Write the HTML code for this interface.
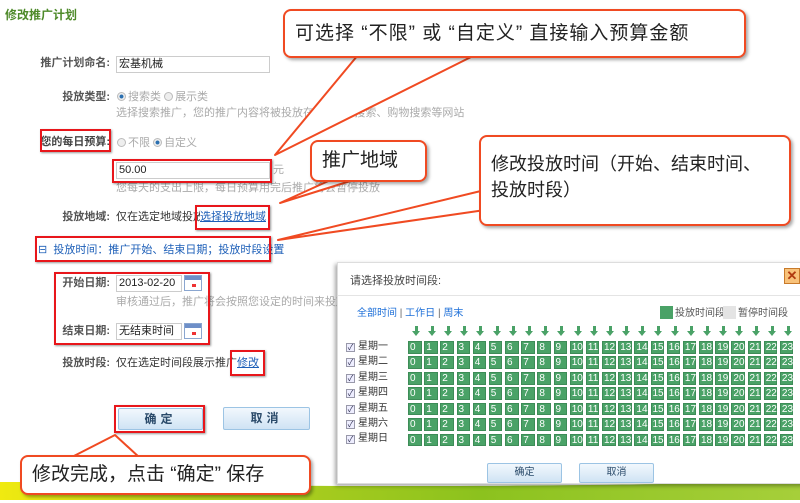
<!DOCTYPE html>
<html><head><meta charset="utf-8"><style>
*{margin:0;padding:0;box-sizing:border-box}
body{width:800px;height:503px;position:relative;overflow:hidden;background:#fff;font-family:"Liberation Sans","Noto Sans CJK SC",sans-serif;font-size:11px;line-height:13px;color:#333}
.a{position:absolute;white-space:nowrap}
.lbl{font-weight:bold;color:#555;text-align:right;width:110px;left:0}
.hint{color:#aaa}
.inp{border:1px solid #ccc;background:#fff;height:17px;padding-left:2px;line-height:15px;color:#222}
.rb{position:absolute;border:2px solid #e8161b;box-shadow:1px 1px 2px rgba(0,0,0,.4)}
.radio{display:inline-block;width:9px;height:9px;border-radius:50%;border:1px solid #bbb;background:#eee;vertical-align:-1px;margin-right:2px}
.radio.on{background:radial-gradient(circle,#2a6fb0 35%,#eee 45%)}
.cal{position:absolute;width:18px;height:16px;border:1px solid #8aa6d0;background:linear-gradient(#6e8fc8 0 4px,#fff 4px);}
.cal:after{content:"";position:absolute;left:7px;top:8px;width:4px;height:3px;background:#e33}
.btn{position:absolute;border:1px solid #9cc4e4;border-radius:2px;background:linear-gradient(#f2f8fd,#cfe3f4);font-weight:bold;color:#2a4a6a;text-align:center;font-size:12px;letter-spacing:4px}
.co{position:absolute;background:#fff;border:2px solid #f04a22;border-radius:8px;box-shadow:2px 2px 3px rgba(0,0,0,.35);font-size:19px;color:#222;padding-left:10px}
.dlg{position:absolute;left:337px;top:262px;width:470px;height:222px;background:#fff;box-shadow:-2px 2px 4px rgba(0,0,0,.35);border:1px solid #ddd}
.row{position:absolute;left:70px;height:13px}
.row span{position:absolute;width:13.5px;height:12.7px;background:#4aa267;color:#fff;font-size:10px;line-height:11px;text-indent:1px;border:1px solid #3d8c57}
.day{position:absolute;left:8px;font-size:10px;line-height:12px;color:#333}
.ck{display:inline-block;width:9px;height:9px;border:1px solid #99a;background:#eef;font-size:8px;line-height:8px;color:#335;text-align:center;margin-right:3px;vertical-align:-1px;font-style:normal}
.ar{position:absolute;top:68px;width:0;height:0;border-left:4px solid transparent;border-right:4px solid transparent;border-top:5px solid #4aa267}
.ar:before{content:"";position:absolute;left:-1.5px;top:-10px;width:3px;height:5px;background:#4aa267}
</style></head><body>

<div class="a" style="left:0;top:482px;width:800px;height:18px;background:linear-gradient(90deg,#f0ea10,#b8d21e 25%,#8cc21e 60%,#a6cf3a)"></div>
<div class="a" style="left:0;top:478px;width:800px;height:8px;background:#fff;border-radius:0 0 50% 50%/0 0 100% 100%"></div>

<div class="a" style="left:5px;top:9px;font-size:12px;font-weight:bold;color:#4e8a2a">修改推广计划</div>

<div class="a lbl" style="top:57px">推广计划命名:</div>
<div class="a inp" style="left:116px;top:56px;width:154px">宏基机械</div>

<div class="a lbl" style="top:91px">投放类型:</div>
<div class="a hint" style="left:117px;top:91px"><i class="radio on"></i>搜索类 <i class="radio"></i>展示类</div>
<div class="a hint" style="left:116px;top:107px">选择搜索推广，您的推广内容将被投放在360综合搜索、购物搜索等网站</div>

<div class="a lbl" style="top:136px;color:#444">您的每日预算:</div>
<div class="a hint" style="left:117px;top:137px"><i class="radio"></i>不限 <i class="radio on"></i>自定义</div>
<div class="a inp" style="left:116px;top:162px;width:154px">50.00</div>
<div class="a hint" style="left:273px;top:164px">元</div>
<div class="a hint" style="left:116px;top:182px">您每天的支出上限，每日预算用完后推广将会暂停投放</div>

<div class="a lbl" style="top:211px">投放地域:</div>
<div class="a" style="left:116px;top:211px">仅在选定地域投放</div>
<div class="a" style="left:200px;top:211px;color:#1d5fb8;text-decoration:underline;background:#fff">选择投放地域</div>

<div class="a" style="left:38px;top:244px;color:#1d5fb8">⊟ &nbsp;投放时间：推广开始、结束日期；投放时段设置</div>

<div class="a lbl" style="top:277px">开始日期:</div>
<div class="a inp" style="left:116px;top:275px;width:66px">2013-02-20</div>
<div class="cal" style="left:184px;top:275px"></div>
<div class="a hint" style="left:116px;top:296px">审核通过后，推广将会按照您设定的时间来投放</div>
<div class="a lbl" style="top:325px">结束日期:</div>
<div class="a inp" style="left:116px;top:323px;width:66px">无结束时间</div>
<div class="cal" style="left:184px;top:323px"></div>

<div class="a lbl" style="top:357px">投放时段:</div>
<div class="a" style="left:116px;top:357px">仅在选定时间段展示推广</div>
<div class="a" style="left:237px;top:357px;color:#1d5fb8;text-decoration:underline">修改</div>

<div class="btn" style="left:118px;top:408px;width:85px;height:22px;line-height:20px">确定</div>
<div class="btn" style="left:223px;top:407px;width:87px;height:23px;line-height:21px">取消</div>

<!-- dialog -->
<div class="dlg">
<div class="a" style="left:12px;top:12px;color:#444">请选择投放时间段:</div>
<div class="a" style="left:446px;top:5px;width:16px;height:16px;border:1px solid #c87a2a;background:#f8c27a;color:#b03a10;font-size:13px;line-height:14px;text-align:center;font-weight:bold">✕</div>
<div class="a" style="left:0;top:32px;width:470px;border-top:1px solid #e4e4e4"></div>
<div class="a" style="left:19px;top:44px;color:#1d6fd8;font-size:10px">全部时间 <span style="color:#666">|</span> 工作日 <span style="color:#666">|</span> 周末</div>
<div class="a" style="left:322px;top:43px;width:13px;height:13px;background:#4aa267"></div>
<div class="a" style="left:337px;top:44px;font-size:10px;color:#555">投放时间段</div>
<div class="a" style="left:385px;top:43px;width:13px;height:13px;background:#e4e4e4"></div>
<div class="a" style="left:400px;top:44px;font-size:10px;color:#555">暂停时间段</div>

<div class="ar" style="left:74px"></div><div class="ar" style="left:90px"></div><div class="ar" style="left:106px"></div><div class="ar" style="left:122px"></div><div class="ar" style="left:138px"></div><div class="ar" style="left:155px"></div><div class="ar" style="left:171px"></div><div class="ar" style="left:187px"></div><div class="ar" style="left:203px"></div><div class="ar" style="left:219px"></div><div class="ar" style="left:236px"></div><div class="ar" style="left:252px"></div><div class="ar" style="left:268px"></div><div class="ar" style="left:284px"></div><div class="ar" style="left:300px"></div><div class="ar" style="left:316px"></div><div class="ar" style="left:333px"></div><div class="ar" style="left:349px"></div><div class="ar" style="left:365px"></div><div class="ar" style="left:381px"></div><div class="ar" style="left:397px"></div><div class="ar" style="left:414px"></div><div class="ar" style="left:430px"></div><div class="ar" style="left:446px"></div>

<div class="day" style="top:78px"><i class="ck">✓</i>星期一</div>
<div class="day" style="top:93px"><i class="ck">✓</i>星期二</div>
<div class="day" style="top:109px"><i class="ck">✓</i>星期三</div>
<div class="day" style="top:124px"><i class="ck">✓</i>星期四</div>
<div class="day" style="top:140px"><i class="ck">✓</i>星期五</div>
<div class="day" style="top:155px"><i class="ck">✓</i>星期六</div>
<div class="day" style="top:170px"><i class="ck">✓</i>星期日</div>

<div class="row" style="top:78px"><span style="left:0">0</span><span style="left:16.2px">1</span><span style="left:32.3px">2</span><span style="left:48.5px">3</span><span style="left:64.7px">4</span><span style="left:80.8px">5</span><span style="left:97px">6</span><span style="left:113.2px">7</span><span style="left:129.4px">8</span><span style="left:145.5px">9</span><span style="left:161.7px">10</span><span style="left:177.9px">11</span><span style="left:194px">12</span><span style="left:210.2px">13</span><span style="left:226.4px">14</span><span style="left:242.5px">15</span><span style="left:258.7px">16</span><span style="left:274.9px">17</span><span style="left:291px">18</span><span style="left:307.2px">19</span><span style="left:323.4px">20</span><span style="left:339.5px">21</span><span style="left:355.7px">22</span><span style="left:371.9px">23</span></div>
<div class="row" style="top:93.4px"><span style="left:0">0</span><span style="left:16.2px">1</span><span style="left:32.3px">2</span><span style="left:48.5px">3</span><span style="left:64.7px">4</span><span style="left:80.8px">5</span><span style="left:97px">6</span><span style="left:113.2px">7</span><span style="left:129.4px">8</span><span style="left:145.5px">9</span><span style="left:161.7px">10</span><span style="left:177.9px">11</span><span style="left:194px">12</span><span style="left:210.2px">13</span><span style="left:226.4px">14</span><span style="left:242.5px">15</span><span style="left:258.7px">16</span><span style="left:274.9px">17</span><span style="left:291px">18</span><span style="left:307.2px">19</span><span style="left:323.4px">20</span><span style="left:339.5px">21</span><span style="left:355.7px">22</span><span style="left:371.9px">23</span></div>
<div class="row" style="top:108.9px"><span style="left:0">0</span><span style="left:16.2px">1</span><span style="left:32.3px">2</span><span style="left:48.5px">3</span><span style="left:64.7px">4</span><span style="left:80.8px">5</span><span style="left:97px">6</span><span style="left:113.2px">7</span><span style="left:129.4px">8</span><span style="left:145.5px">9</span><span style="left:161.7px">10</span><span style="left:177.9px">11</span><span style="left:194px">12</span><span style="left:210.2px">13</span><span style="left:226.4px">14</span><span style="left:242.5px">15</span><span style="left:258.7px">16</span><span style="left:274.9px">17</span><span style="left:291px">18</span><span style="left:307.2px">19</span><span style="left:323.4px">20</span><span style="left:339.5px">21</span><span style="left:355.7px">22</span><span style="left:371.9px">23</span></div>
<div class="row" style="top:124.3px"><span style="left:0">0</span><span style="left:16.2px">1</span><span style="left:32.3px">2</span><span style="left:48.5px">3</span><span style="left:64.7px">4</span><span style="left:80.8px">5</span><span style="left:97px">6</span><span style="left:113.2px">7</span><span style="left:129.4px">8</span><span style="left:145.5px">9</span><span style="left:161.7px">10</span><span style="left:177.9px">11</span><span style="left:194px">12</span><span style="left:210.2px">13</span><span style="left:226.4px">14</span><span style="left:242.5px">15</span><span style="left:258.7px">16</span><span style="left:274.9px">17</span><span style="left:291px">18</span><span style="left:307.2px">19</span><span style="left:323.4px">20</span><span style="left:339.5px">21</span><span style="left:355.7px">22</span><span style="left:371.9px">23</span></div>
<div class="row" style="top:139.8px"><span style="left:0">0</span><span style="left:16.2px">1</span><span style="left:32.3px">2</span><span style="left:48.5px">3</span><span style="left:64.7px">4</span><span style="left:80.8px">5</span><span style="left:97px">6</span><span style="left:113.2px">7</span><span style="left:129.4px">8</span><span style="left:145.5px">9</span><span style="left:161.7px">10</span><span style="left:177.9px">11</span><span style="left:194px">12</span><span style="left:210.2px">13</span><span style="left:226.4px">14</span><span style="left:242.5px">15</span><span style="left:258.7px">16</span><span style="left:274.9px">17</span><span style="left:291px">18</span><span style="left:307.2px">19</span><span style="left:323.4px">20</span><span style="left:339.5px">21</span><span style="left:355.7px">22</span><span style="left:371.9px">23</span></div>
<div class="row" style="top:155.2px"><span style="left:0">0</span><span style="left:16.2px">1</span><span style="left:32.3px">2</span><span style="left:48.5px">3</span><span style="left:64.7px">4</span><span style="left:80.8px">5</span><span style="left:97px">6</span><span style="left:113.2px">7</span><span style="left:129.4px">8</span><span style="left:145.5px">9</span><span style="left:161.7px">10</span><span style="left:177.9px">11</span><span style="left:194px">12</span><span style="left:210.2px">13</span><span style="left:226.4px">14</span><span style="left:242.5px">15</span><span style="left:258.7px">16</span><span style="left:274.9px">17</span><span style="left:291px">18</span><span style="left:307.2px">19</span><span style="left:323.4px">20</span><span style="left:339.5px">21</span><span style="left:355.7px">22</span><span style="left:371.9px">23</span></div>
<div class="row" style="top:170.7px"><span style="left:0">0</span><span style="left:16.2px">1</span><span style="left:32.3px">2</span><span style="left:48.5px">3</span><span style="left:64.7px">4</span><span style="left:80.8px">5</span><span style="left:97px">6</span><span style="left:113.2px">7</span><span style="left:129.4px">8</span><span style="left:145.5px">9</span><span style="left:161.7px">10</span><span style="left:177.9px">11</span><span style="left:194px">12</span><span style="left:210.2px">13</span><span style="left:226.4px">14</span><span style="left:242.5px">15</span><span style="left:258.7px">16</span><span style="left:274.9px">17</span><span style="left:291px">18</span><span style="left:307.2px">19</span><span style="left:323.4px">20</span><span style="left:339.5px">21</span><span style="left:355.7px">22</span><span style="left:371.9px">23</span></div>

<div class="btn" style="left:149px;top:200px;width:75px;height:20px;line-height:18px;font-size:10px;letter-spacing:0;font-weight:normal">确定</div>
<div class="btn" style="left:241px;top:200px;width:75px;height:20px;line-height:18px;font-size:10px;letter-spacing:0;font-weight:normal">取消</div>
</div>

<!-- red boxes -->
<div class="rb" style="left:40px;top:129px;width:71px;height:23px"></div>
<div class="rb" style="left:112px;top:159px;width:160px;height:24px"></div>
<div class="rb" style="left:195px;top:205px;width:75px;height:25px"></div>
<div class="rb" style="left:35px;top:236px;width:236px;height:26px"></div>
<div class="rb" style="left:54px;top:272px;width:156px;height:73px"></div>
<div class="rb" style="left:230px;top:350px;width:35px;height:26px"></div>
<div class="rb" style="left:114px;top:405px;width:91px;height:28px"></div>

<!-- callout tails -->
<svg class="a" style="left:0;top:0" width="800" height="503">
<g fill="#fff" stroke="#f04a22" stroke-width="2" stroke-linejoin="round">
<polygon points="358,55 275,155 475,55"/>
<polygon points="335,178 280,203 360,178"/>
<polygon points="485,190 278,240 485,210"/>
<polygon points="70,458 115,435 140,458"/>
</g>
</svg>

<div class="co" style="left:283px;top:9px;width:463px;height:49px;line-height:45px;letter-spacing:1px">可选择 “不限” 或 “自定义” 直接输入预算金额</div>
<div class="co" style="left:310px;top:140px;width:117px;height:42px;line-height:38px">推广地域</div>
<div class="co" style="left:479px;top:135px;width:312px;height:91px;line-height:26px;padding-top:14px;font-size:18px">修改投放时间（开始、结束时间、<br>投放时段）</div>
<div class="co" style="left:20px;top:455px;width:291px;height:40px;line-height:36px">修改完成，点击 “确定” 保存</div>
</body></html>
